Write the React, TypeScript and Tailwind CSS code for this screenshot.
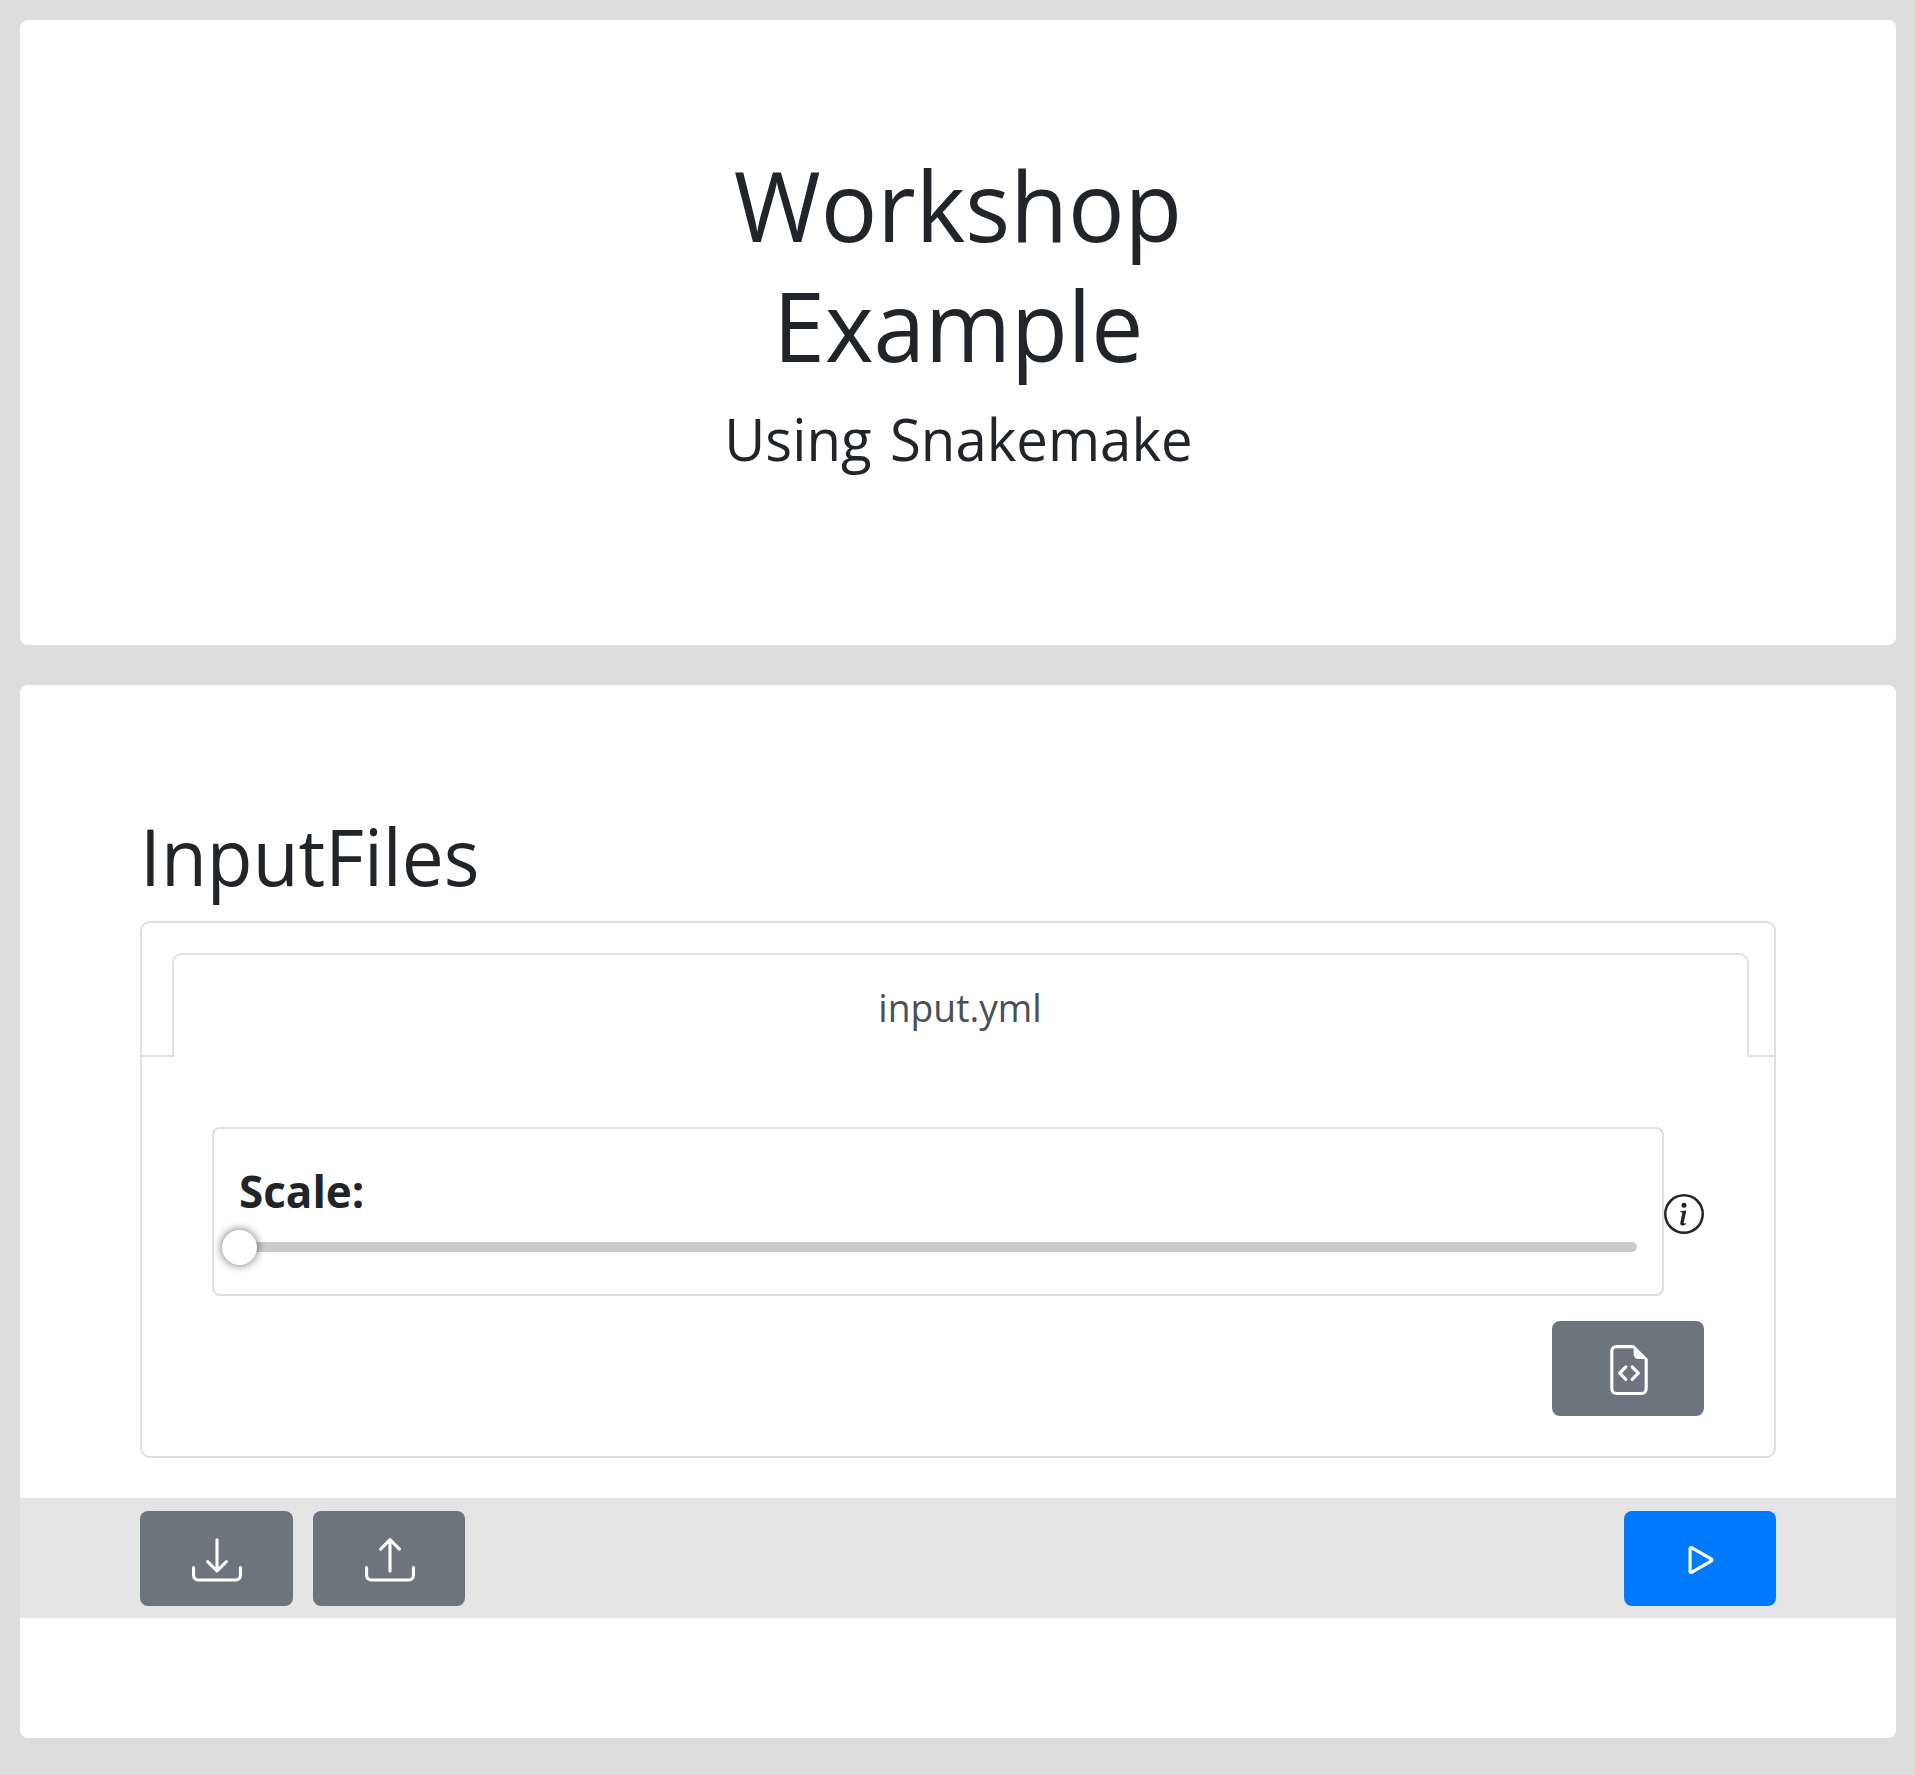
import type { ReactNode } from 'react';
import { BsDownload, BsFileEarmarkCode, BsInfoCircle, BsPlay, BsUpload } from 'react-icons/bs';

function IconButton({ label, className, children }: { label: string; className: string; children: ReactNode }) {
  return (
    <button
      type="button"
      aria-label={label}
      className={`flex h-[95px] items-center justify-center rounded-lg pt-[3px] text-[50px] text-white ${className}`}
    >
      {children}
    </button>
  );
}

function Header() {
  return (
    <header className="flex h-[625px] flex-col items-center rounded-lg bg-white pt-[124px]">
      <h1 className="flex flex-col items-center text-[97px] leading-[120px]">
        <span className="scale-x-[0.971]">Workshop</span>
        <span className="scale-x-[0.957]">Example</span>
      </h1>
      <p className="mt-[18px] scale-x-[0.958] text-[58.8px] leading-[72px] [word-spacing:4px]">Using Snakemake</p>
    </header>
  );
}

function ScaleField() {
  return (
    <div className="flex items-center">
      <div className="h-[169px] flex-1 rounded-lg border-2 border-[#dfdfdf] px-[25px] pt-[37px]">
        <div className="text-[44px] font-bold leading-[50px]">Scale:</div>
        <div className="mt-[26px] flex h-2.5 items-center rounded-full bg-[#cbcbcb]">
          <div className="-ml-[17px] size-[35px] rounded-full bg-white shadow-[0_0_10px_rgba(0,0,0,0.6)]" />
        </div>
      </div>
      <BsInfoCircle className="mt-[5px] size-10" />
    </div>
  );
}

function FilePanel() {
  return (
    <div className="h-[537px] rounded-[10px] border-2 border-[#dfdfdf]">
      <div className="flex h-[134px] items-end pt-[30px]">
        <div className="h-0.5 w-[30px] bg-[#dfdfdf]" />
        <div className="h-[104px] flex-1 rounded-t-[10px] border-2 border-b-0 border-[#dee2e6] pt-[22px] text-center text-[39.2px] leading-[60px] text-[#495057]">
          <span className="inline-block scale-x-[0.95]">input.yml</span>
        </div>
        <div className="h-0.5 w-[25px] bg-[#dfdfdf]" />
      </div>
      <div className="flex flex-col pt-[70px] pr-[70px] pl-[70px]">
        <ScaleField />
        <IconButton label="View file" className="mt-[25px] w-[152px] self-end bg-[#6c757d] pl-0.5">
          <BsFileEarmarkCode />
        </IconButton>
      </div>
    </div>
  );
}

export default function App() {
  return (
    <div className="flex min-h-[1775px] flex-col gap-10 bg-[#dddddd] pt-5 pr-[19px] pl-5 font-['Segoe_UI','Open_Sans',sans-serif] text-[#212529]">
      <Header />
      <main className="h-[1053px] rounded-lg bg-white pt-[123px]">
        <section className="px-[120px]">
          <h2 className="mb-4 origin-left scale-x-[0.96] text-[78px] leading-[97px]">InputFiles</h2>
          <FilePanel />
        </section>
        <div className="mt-10 flex h-[120px] items-center gap-5 bg-[#e5e5e5] px-[120px]">
          <IconButton label="Download" className="w-[153px] bg-[#6c757d]">
            <BsDownload />
          </IconButton>
          <IconButton label="Upload" className="w-[152px] bg-[#6c757d] pl-0.5">
            <BsUpload />
          </IconButton>
          <IconButton label="Run" className="ml-auto w-[152px] bg-[#007bff] pl-0.5">
            <BsPlay />
          </IconButton>
        </div>
      </main>
    </div>
  );
}
